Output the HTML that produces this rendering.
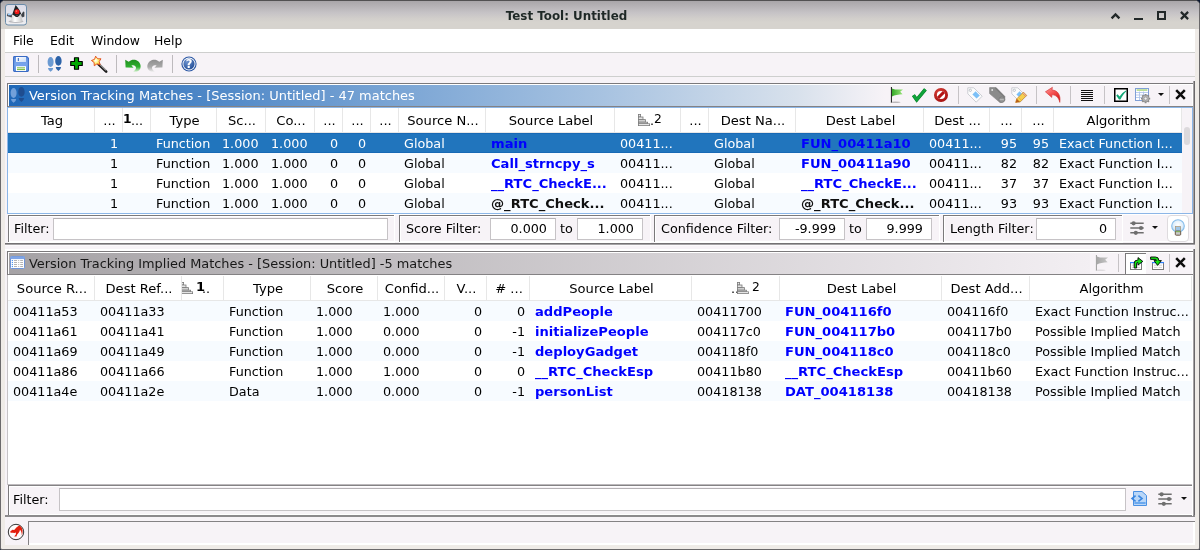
<!DOCTYPE html>
<html><head><meta charset="utf-8"><title>Test Tool: Untitled</title>
<style>
*{box-sizing:border-box;margin:0;padding:0}
html,body{width:1200px;height:550px;overflow:hidden;background:#0c1830}
body{font-family:"DejaVu Sans","Liberation Sans",sans-serif;font-size:13px;color:#000;position:relative}
.a{position:absolute}
.t{line-height:16px;height:16px;white-space:nowrap;will-change:transform}
.in{position:relative}
svg{overflow:visible}
</style></head><body>
<div class="a" style="left:0px;top:0px;width:1200px;height:550px;background:#efebe7;border:1px solid #6b696b;border-top-color:#525152;border-radius:5px 5px 2px 2px"></div>
<div class="a" style="left:1px;top:1px;width:1198px;height:28px;border-radius:4px 4px 0 0;background:linear-gradient(#a9a6a9 0,#b5b2b5 18%,#c6c3c6 42%,#d1cecb 62%,#d6d3ce 76%,#d6d3ce 100%)"></div>
<svg class="a" style="left:5px;top:4px" width="22" height="21" viewBox="0 0 22 21"><defs><linearGradient id="dk1" x1="0" y1="0" x2="0" y2="1"><stop offset="0" stop-color="#dcdce8"/><stop offset="1" stop-color="#eeeef0"/></linearGradient>
<linearGradient id="dk2" x1="0" y1="0" x2="1" y2="0"><stop offset="0" stop-color="#d0d0d0"/><stop offset="0.35" stop-color="#ffffff"/><stop offset="1" stop-color="#c4c4c4"/></linearGradient></defs>
<rect x="0.5" y="0.5" width="21" height="20.5" rx="2.5" fill="url(#dk1)" stroke="#6a8ba8"/>
<ellipse cx="11" cy="17.6" rx="7.5" ry="1.4" fill="#b9b9bd"/>
<path d="M10.6 1 C9.8 3.4 8.6 6.4 7.6 9.6 L6.4 13 L17 12.4 C16 8.6 14 4.4 10.6 1 Z" fill="#1e2224"/>
<path d="M7.2 10.4 C9 11.6 13 11.8 15.8 10 C16.6 12.6 17.2 15 17.6 17.2 C14 18.4 9.4 18.4 6 17.2 C6.2 15 6.6 12.6 7.2 10.4 Z" fill="url(#dk2)"/>
<path d="M8.2 9.6 C9.6 11.6 13.4 11.8 15.4 9.4 C14.4 12 13 13 11.6 13 C10.2 13 9 12 8.2 9.6Z" fill="#1e2224"/>
<circle cx="12" cy="7.8" r="2.5" fill="#f01818"/><circle cx="11.4" cy="7.1" r="0.9" fill="#ff6a5a"/>
<path d="M7 10.6 L2.4 9.6 L1.8 12 L6.6 13.4 Z" fill="#4a4e55"/><ellipse cx="4.6" cy="10.4" rx="1.9" ry="0.9" fill="#9fd0ff"/>
<path d="M16.4 10.6 L18.2 7.6 L19.4 8 L19.4 12.6 L17.4 13.4 Z" fill="#3c4046"/></svg>
<div class="a t " style="left:0px;top:8px;width:1133px;text-align:center;font-size:11.9px;font-weight:bold;color:#1e2826">Test Tool: Untitled</div>
<svg class="a" style="left:1110px;top:12px" width="11" height="8" viewBox="0 0 11 8"><path d="M1.6 6.4 L5.5 2.4 L9.4 6.4" fill="none" stroke="#222829" stroke-width="2.3"/></svg>
<div class="a" style="left:1134px;top:18px;width:9px;height:2px;background:#222829"></div>
<div class="a" style="left:1157px;top:11px;width:9px;height:9px;border:2px solid #222829"></div>
<svg class="a" style="left:1180px;top:11px" width="9" height="9" viewBox="0 0 9 9"><path d="M0.9 0.9 L8.1 8.1 M8.1 0.9 L0.9 8.1" stroke="#222829" stroke-width="2.2"/></svg>
<div class="a" style="left:5px;top:29px;width:1190px;height:23px;background:#fff"></div>
<div class="a t " style="left:13px;top:33px;font-size:12.4px">File</div>
<div class="a t " style="left:50px;top:33px;font-size:12.4px">Edit</div>
<div class="a t " style="left:91px;top:33px;font-size:12.4px">Window</div>
<div class="a t " style="left:154px;top:33px;font-size:12.4px">Help</div>
<div class="a" style="left:5px;top:52px;width:1190px;height:493px;background:#f7f3f7"></div>
<div class="a" style="left:5px;top:52px;width:1190px;height:1px;background:#cecfce"></div>
<div class="a" style="left:5px;top:76px;width:1190px;height:1px;background:#cecfce"></div>
<div class="a" style="left:38px;top:55px;width:1px;height:18px;background:#bdbabd"></div>
<div class="a" style="left:116px;top:55px;width:1px;height:18px;background:#bdbabd"></div>
<div class="a" style="left:172px;top:55px;width:1px;height:18px;background:#bdbabd"></div>
<svg class="a" style="left:13px;top:56px" width="16" height="16" viewBox="0 0 16 16"><defs><linearGradient id="fl1" x1="0" y1="0" x2="0" y2="1"><stop offset="0" stop-color="#5b8ee0"/><stop offset="0.5" stop-color="#78a4ec"/><stop offset="1" stop-color="#5f93e4"/></linearGradient>
<linearGradient id="fl2" x1="0" y1="0" x2="1" y2="1"><stop offset="0" stop-color="#ffffff"/><stop offset="1" stop-color="#c9dcf6"/></linearGradient></defs>
<path d="M0.6 1.4 Q0.6 0.6 1.4 0.6 L13.8 0.6 L15.4 2.2 L15.4 14.6 Q15.4 15.4 14.6 15.4 L1.4 15.4 Q0.6 15.4 0.6 14.6 Z" fill="url(#fl1)" stroke="#3a6bc4" stroke-width="1.1"/>
<rect x="3" y="1" width="10" height="5" fill="url(#fl2)"/>
<rect x="4.8" y="2" width="1.1" height="3" fill="#3a6bc4"/>
<rect x="3" y="10.2" width="10" height="4.8" fill="#ffffff"/>
<rect x="4" y="11.3" width="8" height="1.1" fill="#7fbf4a"/><rect x="4" y="13" width="8" height="1.1" fill="#7fbf4a"/></svg>
<svg class="a" style="left:47px;top:56px" width="16" height="16" viewBox="0 0 16 16"><ellipse cx="3.6" cy="6" rx="3" ry="5" fill="#6b9ad2"/><path d="M1 12 L6.2 12 Q6 14.6 3.6 15.8 Q1.2 14.6 1 12Z" fill="#6b9ad2"/>
<ellipse cx="11.4" cy="4.9" rx="3.2" ry="4.9" fill="#2c62a8"/><path d="M8.7 11 L14.1 11 Q13.9 13.8 11.4 15 Q8.9 13.8 8.7 11Z" fill="#2c62a8"/></svg>
<svg class="a" style="left:70px;top:57px" width="13" height="13" viewBox="0 0 13 13"><path d="M4.5 0.75 H8.5 V4.5 H12.25 V8.5 H8.5 V12.25 H4.5 V8.5 H0.75 V4.5 H4.5 Z" fill="#00a800" stroke="#000" stroke-width="1.2" stroke-linejoin="round"/></svg>
<svg class="a" style="left:91px;top:56px" width="16" height="16" viewBox="0 0 16 16"><defs><radialGradient id="wg" cx="0.45" cy="0.45" r="0.6"><stop offset="0" stop-color="#ffffff"/><stop offset="0.45" stop-color="#fff27a"/><stop offset="1" stop-color="#ffc21a"/></radialGradient></defs>
<path d="M7.6 8.2 L15.2 15.6" stroke="#1c1c1c" stroke-width="2.6" stroke-linecap="round"/><path d="M8 7.6 L15 14.4" stroke="#a8a8a8" stroke-width="1.1"/>
<path d="M4.61 0.18 L6.68 2.77 L10.00 2.81 L8.17 5.58 L9.17 8.74 L5.97 7.86 L3.26 9.78 L3.12 6.47 L0.45 4.49 L3.56 3.32 Z" fill="url(#wg)" stroke="#e2481a" stroke-width="0.9" stroke-linejoin="round"/></svg>
<svg class="a" style="left:125px;top:59px" width="16" height="14" viewBox="0 0 16 14"><defs><linearGradient id="ug" x1="0" y1="0" x2="0" y2="1"><stop offset="0" stop-color="#1f8f1f"/><stop offset="0.6" stop-color="#2fae2f"/><stop offset="1" stop-color="#d4f0d0"/></linearGradient></defs><path d="M0.2 0.8 L0.6 8.4 L8.6 8.8 L6.4 6.6 C8.6 5.6 10.8 6.6 11 8.6 C11.1 10.4 10 11.8 8.2 12.4 C11 13.4 14 12.2 15.3 9.4 C16.6 5.6 14 1.6 10 0.8 C8 0.4 5.8 0.9 3.6 2.8 Z" fill="url(#ug)"/></svg>
<svg class="a" style="left:147px;top:59px" width="16" height="14" viewBox="0 0 16 14"><defs><linearGradient id="rg" x1="0" y1="0" x2="0" y2="1"><stop offset="0" stop-color="#8e8e8e"/><stop offset="0.6" stop-color="#a9a9a9"/><stop offset="1" stop-color="#ececec"/></linearGradient></defs><g transform="translate(16,0) scale(-1,1)"><path d="M0.2 0.8 L0.6 8.4 L8.6 8.8 L6.4 6.6 C8.6 5.6 10.8 6.6 11 8.6 C11.1 10.4 10 11.8 8.2 12.4 C11 13.4 14 12.2 15.3 9.4 C16.6 5.6 14 1.6 10 0.8 C8 0.4 5.8 0.9 3.6 2.8 Z" fill="url(#rg)"/></g></svg>
<svg class="a" style="left:181px;top:56px;will-change:transform" width="16" height="16" viewBox="0 0 16 16"><defs><radialGradient id="hg" cx="0.35" cy="0.3" r="0.8"><stop offset="0" stop-color="#6d93cf"/><stop offset="1" stop-color="#1f4a94"/></radialGradient></defs>
<circle cx="8" cy="8" r="7.6" fill="#2a57a4"/><circle cx="8" cy="8" r="6.5" fill="#fff"/><circle cx="8" cy="8" r="5.6" fill="url(#hg)"/>
<text x="8" y="12.2" text-anchor="middle" font-family="DejaVu Sans" font-weight="bold" font-size="11.5" fill="#fff">?</text></svg>
<div class="a" style="left:7px;top:83px;width:1188px;height:1px;background:#7b797b"></div>
<div class="a" style="left:7px;top:83px;width:1px;height:24px;background:#7b797b"></div>
<div class="a" style="left:1193px;top:81px;width:1px;height:163px;background:#a5a2a5"></div>
<div class="a" style="left:1194px;top:81px;width:1px;height:163px;background:#6b696b"></div>
<div class="a" style="left:8px;top:241px;width:1184px;height:1px;background:#fff"></div>
<div class="a" style="left:5px;top:243px;width:1190px;height:1px;background:#737173"></div>
<div class="a" style="left:5px;top:244px;width:1190px;height:1px;background:#a5a2a5"></div>
<div class="a" style="left:5px;top:245px;width:1188px;height:1px;background:#fcfafc"></div>
<div class="a" style="left:5px;top:249px;width:1188px;height:2px;background:#fff"></div>
<div class="a" style="left:8px;top:84px;width:1185px;height:1px;background:#fff"></div>
<div class="a" style="left:8px;top:84px;width:1px;height:22px;background:#fff"></div>
<div class="a" style="left:1192px;top:84px;width:1px;height:159px;background:#fff"></div>
<div class="a" style="left:9px;top:85px;width:876px;height:21px;background:linear-gradient(90deg,#2068b8 0,#7ca6d5 45%,#a8c3e1 68%,#d8e1ec 90%,#f7f3f7 100%)"></div>
<div class="a" style="left:8px;top:106px;width:1185px;height:1px;background:#848284"></div>
<svg class="a" style="left:10px;top:87px" width="16" height="16" viewBox="0 0 16 16"><ellipse cx="3.6" cy="6" rx="3" ry="5" fill="#72a0da"/><path d="M1 12 L6.2 12 Q6 14.6 3.6 15.8 Q1.2 14.6 1 12Z" fill="#72a0da"/>
<ellipse cx="11.4" cy="4.9" rx="3.2" ry="4.9" fill="#1f4d90"/><path d="M8.7 11 L14.1 11 Q13.9 13.8 11.4 15 Q8.9 13.8 8.7 11Z" fill="#1f4d90"/></svg>
<div class="a t " style="left:29px;top:88px;font-size:12.97px;color:#fff">Version Tracking Matches - [Session: Untitled] - 47 matches</div>
<div class="a" style="left:958px;top:86px;width:1px;height:18px;background:#c6c3c6"></div>
<div class="a" style="left:1036px;top:86px;width:1px;height:18px;background:#c6c3c6"></div>
<div class="a" style="left:1070px;top:86px;width:1px;height:18px;background:#c6c3c6"></div>
<div class="a" style="left:1104px;top:86px;width:1px;height:18px;background:#c6c3c6"></div>
<div class="a" style="left:1169px;top:86px;width:1px;height:18px;background:#c6c3c6"></div>
<svg class="a" style="left:890px;top:87px" width="14" height="16" viewBox="0 0 14 16"><defs><linearGradient id="fg1" x1="0" y1="0" x2="1" y2="0"><stop offset="0" stop-color="#35a828"/><stop offset="1" stop-color="#9be67a"/></linearGradient></defs>
<rect x="0.9" y="0" width="1.1" height="15.5" fill="#2d2d2d"/>
<path d="M2 1.4 C4.5 2.6 8.5 2.8 13 2.4 L10.2 4.8 L12.6 7.2 C8.4 7.4 4.4 8 2 9.4 Z" fill="url(#fg1)"/>
<ellipse cx="5.5" cy="15.2" rx="5" ry="0.7" fill="#2d2d2d" opacity="0.3"/></svg>
<svg class="a" style="left:912px;top:88px" width="15" height="14" viewBox="0 0 15 14"><path d="M1.4 7.2 L4.7 11.8 L13.4 1.3" fill="none" stroke="#067a24" stroke-width="3.6" stroke-linejoin="miter"/><path d="M1.4 7.2 L4.7 11.8 L13.4 1.3" fill="none" stroke="#0fa33a" stroke-width="2.6" stroke-linejoin="miter"/></svg>
<svg class="a" style="left:934px;top:88px" width="14" height="14" viewBox="0 0 14 14"><defs><radialGradient id="ng" cx="0.4" cy="0.3" r="0.8"><stop offset="0" stop-color="#d8433a"/><stop offset="1" stop-color="#a00a0a"/></radialGradient></defs>
<circle cx="7" cy="7" r="7" fill="url(#ng)"/><circle cx="7" cy="7" r="4.1" fill="#fff"/>
<path d="M2.9 8.9 L8.9 2.9 L11.1 5.1 L5.1 11.1 Z" fill="#b41414"/></svg>
<svg class="a" style="left:967px;top:87px" width="16" height="16" viewBox="0 0 16 16"><path d="M0.8 0.8 L6.8 0.8 L15.2 9.2 L9.2 15.2 L0.8 6.8 Z" fill="#fcfcfc" stroke="#c6c8cf" stroke-width="0.9" stroke-linejoin="round"/>
<circle cx="3.3" cy="3.3" r="1.15" fill="#fff" stroke="#a9adb8" stroke-width="0.7"/>
<path d="M5.4 7.4 L8.6 4.2 L12.8 8.4 L9.6 11.6 Z" fill="#7cc0f7"/></svg>
<svg class="a" style="left:989px;top:87px" width="16" height="16" viewBox="0 0 16 16"><path d="M0.6 0.6 L7 0.6 L15.8 9.4 L15.8 13.6 Q14.4 16 11 15.6 L0.6 6.6 Z" fill="#8b8b8b" stroke="#7c7c7c" stroke-width="0.6"/>
<path d="M7 0.6 L15.8 9.4 L15.8 11 L6 1.4Z" fill="#7a7a7a"/>
<circle cx="3.2" cy="3" r="0.9" fill="#e8e8e8"/><ellipse cx="12.8" cy="12.6" rx="2.9" ry="2.7" fill="#979797" stroke="#767676" stroke-width="0.6"/><rect x="10.8" y="12.1" width="4" height="1" fill="#bdbdbd"/></svg>
<svg class="a" style="left:1011px;top:87px" width="16" height="16" viewBox="0 0 16 16"><path d="M0.8 0.8 L6.8 0.8 L15.2 9.2 L9.2 15.2 L0.8 6.8 Z" fill="#fcfcfc" stroke="#c6c8cf" stroke-width="0.9" stroke-linejoin="round"/>
<circle cx="3.3" cy="3.3" r="1.15" fill="#fff" stroke="#a9adb8" stroke-width="0.7"/>
<path d="M5.4 7.4 L8.6 4.2 L12.8 8.4 L9.6 11.6 Z" fill="#7cc0f7"/><path d="M4.6 15.4 L5.8 11.8 L12.4 5.2 L15.6 8.4 L9 15 Z" fill="#f6cf4e" stroke="#c8862a" stroke-width="0.7"/><path d="M7.4 10.2 L10.6 13.4" stroke="#e8b030" stroke-width="0.8"/><path d="M4.6 15.4 L5.8 11.8 L9 15 Z" fill="#b8601a"/><path d="M11.4 6.2 L14.6 9.4 L15.6 8.4 L12.4 5.2Z" fill="#f0b0a0" stroke="#c8862a" stroke-width="0.5"/></svg>
<svg class="a" style="left:1045px;top:87px" width="16" height="16" viewBox="0 0 16 16"><defs><linearGradient id="ru" x1="0" y1="0" x2="0.6" y2="1"><stop offset="0" stop-color="#ff9c9c"/><stop offset="0.5" stop-color="#f45050"/><stop offset="1" stop-color="#d81818"/></linearGradient></defs>
<path d="M0.4 4.8 L7.4 0.3 L7 3 C12.6 3.2 16 8 14.8 15.4 C13.6 10.4 11 7.8 6.8 7.8 L6.8 10.4 Z" fill="url(#ru)" stroke="#d03030" stroke-width="0.6" stroke-linejoin="round"/></svg>
<svg class="a" style="left:1081px;top:90px" width="12" height="11" viewBox="0 0 12 11"><rect x="0" y="0" width="12" height="1" fill="#111"/><rect x="0" y="2" width="12" height="1" fill="#111"/><rect x="0" y="4" width="12" height="1" fill="#111"/><rect x="0" y="6" width="12" height="1" fill="#111"/><rect x="0" y="8" width="12" height="1" fill="#111"/><rect x="0" y="10" width="12" height="1" fill="#111"/></svg>
<svg class="a" style="left:1114px;top:88px" width="14" height="14" viewBox="0 0 14 14"><rect x="0.75" y="0.75" width="12.5" height="12.5" fill="#fff" stroke="#000" stroke-width="1.5"/>
<path d="M2.2 7.4 L3.6 6.2 L5.6 8.6 C7.4 5.8 9.4 3.8 12 2.4 L12.4 3.2 C10 5.4 8 8 6.4 11.6 L5 11.6 Z" fill="#12a878"/></svg>
<svg class="a" style="left:1135px;top:88px" width="16" height="16" viewBox="0 0 16 16"><rect x="0.5" y="0.5" width="13" height="12" fill="#fff" stroke="#7f9fd6"/><rect x="1" y="1" width="12" height="2" fill="#eaf2e0"/><rect x="2" y="1.6" width="10" height="0.9" fill="#8ccb52"/>
<g stroke="#a9c2ea" stroke-width="0.8"><path d="M1 4.5H13M1 7H13M1 9.5H13M4.5 3.5V12M8.5 3.5V12"/></g>
<g transform="translate(10.6,10.6)"><circle r="3.8" fill="#9a9a9a"/><g stroke="#8a8a8a" stroke-width="1.8"><path d="M-4.6 0H4.6M0 -4.6V4.6M-3.3 -3.3L3.3 3.3M-3.3 3.3L3.3 -3.3"/></g><circle r="3" fill="#b4b4b4"/><circle r="1.5" fill="#f2f2f2" stroke="#808080" stroke-width="0.5"/></g></svg>
<svg class="a" style="left:1158px;top:93px" width="6" height="3" viewBox="0 0 6 3"><path d="M0 0 H6 L3 3 Z" fill="#111"/></svg>
<svg class="a" style="left:1175px;top:89px" width="11" height="11" viewBox="0 0 11 11"><path d="M1.2 1.2 L9.8 9.8 M9.8 1.2 L1.2 9.8" stroke="#0c0c0c" stroke-width="2.5"/></svg>
<div class="a" style="left:7px;top:107px;width:1186px;height:1px;background:#8cb6e7"></div>
<div class="a" style="left:7px;top:107px;width:1px;height:107px;background:#8cb6e7"></div>
<div class="a" style="left:7px;top:213px;width:1186px;height:1px;background:#8cb6e7"></div>
<div class="a" style="left:1192px;top:107px;width:1px;height:107px;background:#8cb6e7"></div>
<div class="a" style="left:8px;top:108px;width:1184px;height:105px;background:#fff"></div>
<div class="a" style="left:8px;top:132px;width:1174px;height:1px;background:#e7e7e7"></div>
<div class="a" style="left:94px;top:108px;width:1px;height:24px;background:#e7e7e7"></div>
<div class="a t " style="left:9px;top:113px;width:86px;text-align:center;font-size:13.1px">Tag</div>
<div class="a" style="left:122px;top:108px;width:1px;height:24px;background:#e7e7e7"></div>
<div class="a t " style="left:96px;top:113px;width:27px;text-align:center;font-size:13.1px">...</div>
<div class="a" style="left:150px;top:108px;width:1px;height:24px;background:#e7e7e7"></div>
<div class="a" style="left:216px;top:108px;width:1px;height:24px;background:#e7e7e7"></div>
<div class="a t " style="left:152px;top:113px;width:65px;text-align:center;font-size:13.1px">Type</div>
<div class="a" style="left:265px;top:108px;width:1px;height:24px;background:#e7e7e7"></div>
<div class="a t " style="left:218px;top:113px;width:48px;text-align:center;font-size:13.1px">Sc...</div>
<div class="a" style="left:314px;top:108px;width:1px;height:24px;background:#e7e7e7"></div>
<div class="a t " style="left:267px;top:113px;width:48px;text-align:center;font-size:13.1px">Co...</div>
<div class="a" style="left:342px;top:108px;width:1px;height:24px;background:#e7e7e7"></div>
<div class="a t " style="left:316px;top:113px;width:27px;text-align:center;font-size:13.1px">...</div>
<div class="a" style="left:370px;top:108px;width:1px;height:24px;background:#e7e7e7"></div>
<div class="a t " style="left:344px;top:113px;width:27px;text-align:center;font-size:13.1px">...</div>
<div class="a" style="left:398px;top:108px;width:1px;height:24px;background:#e7e7e7"></div>
<div class="a t " style="left:372px;top:113px;width:27px;text-align:center;font-size:13.1px">...</div>
<div class="a" style="left:485px;top:108px;width:1px;height:24px;background:#e7e7e7"></div>
<div class="a t " style="left:400px;top:113px;width:86px;text-align:center;font-size:13.1px">Source N...</div>
<div class="a" style="left:614px;top:108px;width:1px;height:24px;background:#e7e7e7"></div>
<div class="a t " style="left:487px;top:113px;width:128px;text-align:center;font-size:13.1px">Source Label</div>
<div class="a" style="left:680px;top:108px;width:1px;height:24px;background:#e7e7e7"></div>
<div class="a" style="left:708px;top:108px;width:1px;height:24px;background:#e7e7e7"></div>
<div class="a t " style="left:682px;top:113px;width:27px;text-align:center;font-size:13.1px">...</div>
<div class="a" style="left:795px;top:108px;width:1px;height:24px;background:#e7e7e7"></div>
<div class="a t " style="left:710px;top:113px;width:86px;text-align:center;font-size:13.1px">Dest Na...</div>
<div class="a" style="left:923px;top:108px;width:1px;height:24px;background:#e7e7e7"></div>
<div class="a t " style="left:797px;top:113px;width:127px;text-align:center;font-size:13.1px">Dest Label</div>
<div class="a" style="left:989px;top:108px;width:1px;height:24px;background:#e7e7e7"></div>
<div class="a t " style="left:925px;top:113px;width:65px;text-align:center;font-size:13.1px">Dest ...</div>
<div class="a" style="left:1021px;top:108px;width:1px;height:24px;background:#e7e7e7"></div>
<div class="a t " style="left:991px;top:113px;width:31px;text-align:center;font-size:13.1px">...</div>
<div class="a" style="left:1053px;top:108px;width:1px;height:24px;background:#e7e7e7"></div>
<div class="a t " style="left:1023px;top:113px;width:31px;text-align:center;font-size:13.1px">...</div>
<div class="a" style="left:1181px;top:108px;width:1px;height:24px;background:#e7e7e7"></div>
<div class="a t " style="left:1055px;top:113px;width:127px;text-align:center;font-size:13.1px">Algorithm</div>
<div class="a t " style="left:123px;top:111px;font-size:12.3px;font-weight:bold">1</div>
<div class="a t " style="left:131px;top:113px;font-size:12.75px">...</div>
<svg class="a" style="left:638px;top:114px" width="12" height="12" viewBox="0 0 12 12"><g fill="#e4e4e4" stroke="#7a7a7a" stroke-width="0.8"><rect x="0.4" y="0.4" width="2.2" height="2.6"/><rect x="0.4" y="3" width="4.6" height="2.6"/><rect x="0.4" y="5.6" width="7" height="2.6" fill="#cfcfcf"/><rect x="0.4" y="8.2" width="9.2" height="1.6"/><rect x="0.4" y="9.8" width="11.2" height="1.8" fill="#fff"/></g></svg>
<div class="a t " style="left:650px;top:113px;font-size:12.75px">.</div>
<div class="a t " style="left:654px;top:111px;font-size:12.3px">2</div>
<div class="a" style="left:8px;top:133px;width:1174px;height:20px;background:#2175bd;overflow:hidden"></div>
<div class="a" style="left:8px;top:133px;width:1174px;height:1px;background:#1869b5"></div>
<div class="a" style="left:8px;top:152px;width:1174px;height:1px;background:#1869b5"></div>
<div class="a t " style="left:95px;top:136px;width:23px;text-align:right;font-size:12.75px;color:#fff;">1</div>
<div class="a t " style="left:156px;top:136px;font-size:12.75px;color:#fff;">Function</div>
<div class="a t " style="left:222px;top:136px;font-size:12.75px;color:#fff;">1.000</div>
<div class="a t " style="left:271px;top:136px;font-size:12.75px;color:#fff;">1.000</div>
<div class="a t " style="left:315px;top:136px;width:23px;text-align:right;font-size:12.75px;color:#fff;">0</div>
<div class="a t " style="left:343px;top:136px;width:23px;text-align:right;font-size:12.75px;color:#fff;">0</div>
<div class="a t " style="left:404px;top:136px;font-size:12.75px;color:#fff;">Global</div>
<div class="a t " style="left:491px;top:136px;font-size:13.1px;font-weight:bold;color:#0000ff">main</div>
<div class="a t " style="left:620px;top:136px;font-size:12.75px;color:#fff;">00411...</div>
<div class="a t " style="left:714px;top:136px;font-size:12.75px;color:#fff;">Global</div>
<div class="a t " style="left:801px;top:136px;font-size:13.1px;font-weight:bold;color:#0000ff">FUN_00411a10</div>
<div class="a t " style="left:929px;top:136px;font-size:12.75px;color:#fff;">00411...</div>
<div class="a t " style="left:990px;top:136px;width:27px;text-align:right;font-size:12.75px;color:#fff;">95</div>
<div class="a t " style="left:1022px;top:136px;width:27px;text-align:right;font-size:12.75px;color:#fff;">95</div>
<div class="a t " style="left:1059px;top:136px;font-size:12.75px;color:#fff;">Exact Function I...</div>
<div class="a" style="left:8px;top:153px;width:1174px;height:20px;background:#f7fbff;overflow:hidden"></div>
<div class="a t " style="left:95px;top:156px;width:23px;text-align:right;font-size:12.75px;">1</div>
<div class="a t " style="left:156px;top:156px;font-size:12.75px;">Function</div>
<div class="a t " style="left:222px;top:156px;font-size:12.75px;">1.000</div>
<div class="a t " style="left:271px;top:156px;font-size:12.75px;">1.000</div>
<div class="a t " style="left:315px;top:156px;width:23px;text-align:right;font-size:12.75px;">0</div>
<div class="a t " style="left:343px;top:156px;width:23px;text-align:right;font-size:12.75px;">0</div>
<div class="a t " style="left:404px;top:156px;font-size:12.75px;">Global</div>
<div class="a t " style="left:491px;top:156px;font-size:13.1px;font-weight:bold;color:#0000ff">Call_strncpy_s</div>
<div class="a t " style="left:620px;top:156px;font-size:12.75px;">00411...</div>
<div class="a t " style="left:714px;top:156px;font-size:12.75px;">Global</div>
<div class="a t " style="left:801px;top:156px;font-size:13.1px;font-weight:bold;color:#0000ff">FUN_00411a90</div>
<div class="a t " style="left:929px;top:156px;font-size:12.75px;">00411...</div>
<div class="a t " style="left:990px;top:156px;width:27px;text-align:right;font-size:12.75px;">82</div>
<div class="a t " style="left:1022px;top:156px;width:27px;text-align:right;font-size:12.75px;">82</div>
<div class="a t " style="left:1059px;top:156px;font-size:12.75px;">Exact Function I...</div>
<div class="a" style="left:8px;top:173px;width:1174px;height:20px;background:#fff;overflow:hidden"></div>
<div class="a t " style="left:95px;top:176px;width:23px;text-align:right;font-size:12.75px;">1</div>
<div class="a t " style="left:156px;top:176px;font-size:12.75px;">Function</div>
<div class="a t " style="left:222px;top:176px;font-size:12.75px;">1.000</div>
<div class="a t " style="left:271px;top:176px;font-size:12.75px;">1.000</div>
<div class="a t " style="left:315px;top:176px;width:23px;text-align:right;font-size:12.75px;">0</div>
<div class="a t " style="left:343px;top:176px;width:23px;text-align:right;font-size:12.75px;">0</div>
<div class="a t " style="left:404px;top:176px;font-size:12.75px;">Global</div>
<div class="a t " style="left:491px;top:176px;font-size:13.1px;font-weight:bold;color:#0000ff">__RTC_CheckE...</div>
<div class="a t " style="left:620px;top:176px;font-size:12.75px;">00411...</div>
<div class="a t " style="left:714px;top:176px;font-size:12.75px;">Global</div>
<div class="a t " style="left:801px;top:176px;font-size:13.1px;font-weight:bold;color:#0000ff">__RTC_CheckE...</div>
<div class="a t " style="left:929px;top:176px;font-size:12.75px;">00411...</div>
<div class="a t " style="left:990px;top:176px;width:27px;text-align:right;font-size:12.75px;">37</div>
<div class="a t " style="left:1022px;top:176px;width:27px;text-align:right;font-size:12.75px;">37</div>
<div class="a t " style="left:1059px;top:176px;font-size:12.75px;">Exact Function I...</div>
<div class="a" style="left:8px;top:193px;width:1174px;height:20px;background:#f7fbff;overflow:hidden"></div>
<div class="a t " style="left:95px;top:196px;width:23px;text-align:right;font-size:12.75px;">1</div>
<div class="a t " style="left:156px;top:196px;font-size:12.75px;">Function</div>
<div class="a t " style="left:222px;top:196px;font-size:12.75px;">1.000</div>
<div class="a t " style="left:271px;top:196px;font-size:12.75px;">1.000</div>
<div class="a t " style="left:315px;top:196px;width:23px;text-align:right;font-size:12.75px;">0</div>
<div class="a t " style="left:343px;top:196px;width:23px;text-align:right;font-size:12.75px;">0</div>
<div class="a t " style="left:404px;top:196px;font-size:12.75px;">Global</div>
<div class="a t " style="left:491px;top:196px;font-size:13.1px;font-weight:bold;color:#101010">@_RTC_Check...</div>
<div class="a t " style="left:620px;top:196px;font-size:12.75px;">00411...</div>
<div class="a t " style="left:714px;top:196px;font-size:12.75px;">Global</div>
<div class="a t " style="left:801px;top:196px;font-size:13.1px;font-weight:bold;color:#101010">@_RTC_Check...</div>
<div class="a t " style="left:929px;top:196px;font-size:12.75px;">00411...</div>
<div class="a t " style="left:990px;top:196px;width:27px;text-align:right;font-size:12.75px;">93</div>
<div class="a t " style="left:1022px;top:196px;width:27px;text-align:right;font-size:12.75px;">93</div>
<div class="a t " style="left:1059px;top:196px;font-size:12.75px;">Exact Function I...</div>
<div class="a" style="left:1182px;top:108px;width:10px;height:105px;background:#f7f3f7"></div>
<div class="a" style="left:1184px;top:127px;width:6px;height:18px;background:#dcd9dc;border-radius:3px"></div>
<div class="a" style="left:8px;top:214px;width:1184px;height:1px;background:#fff"></div>
<div class="a" style="left:8px;top:215px;width:386px;height:1px;background:#7b797b"></div>
<div class="a" style="left:8px;top:215px;width:1px;height:27px;background:#7b797b"></div>
<div class="a" style="left:9px;top:216px;width:385px;height:1px;background:#fff"></div>
<div class="a" style="left:9px;top:216px;width:1px;height:26px;background:#fff"></div>
<div class="a" style="left:394px;top:215px;width:1px;height:28px;background:#fff"></div>
<div class="a" style="left:8px;top:242px;width:386px;height:1px;background:#fff"></div>
<div class="a" style="left:399px;top:215px;width:251px;height:1px;background:#7b797b"></div>
<div class="a" style="left:399px;top:215px;width:1px;height:27px;background:#7b797b"></div>
<div class="a" style="left:400px;top:216px;width:250px;height:1px;background:#fff"></div>
<div class="a" style="left:400px;top:216px;width:1px;height:26px;background:#fff"></div>
<div class="a" style="left:650px;top:215px;width:1px;height:28px;background:#fff"></div>
<div class="a" style="left:399px;top:242px;width:251px;height:1px;background:#fff"></div>
<div class="a" style="left:654px;top:215px;width:285px;height:1px;background:#7b797b"></div>
<div class="a" style="left:654px;top:215px;width:1px;height:27px;background:#7b797b"></div>
<div class="a" style="left:655px;top:216px;width:284px;height:1px;background:#fff"></div>
<div class="a" style="left:655px;top:216px;width:1px;height:26px;background:#fff"></div>
<div class="a" style="left:939px;top:215px;width:1px;height:28px;background:#fff"></div>
<div class="a" style="left:654px;top:242px;width:285px;height:1px;background:#fff"></div>
<div class="a" style="left:943px;top:215px;width:179px;height:1px;background:#7b797b"></div>
<div class="a" style="left:943px;top:215px;width:1px;height:27px;background:#7b797b"></div>
<div class="a" style="left:944px;top:216px;width:178px;height:1px;background:#fff"></div>
<div class="a" style="left:944px;top:216px;width:1px;height:26px;background:#fff"></div>
<div class="a" style="left:1122px;top:215px;width:1px;height:28px;background:#fff"></div>
<div class="a" style="left:943px;top:242px;width:179px;height:1px;background:#fff"></div>
<div class="a t " style="left:14px;top:221px;font-size:12.75px">Filter:</div>
<div class="a" style="left:53px;top:218px;width:335px;height:22px;background:#fff;border:1px solid #c6c3c6;border-top-color:#b5b2b5"></div>
<div class="a t " style="left:406px;top:221px;font-size:12.75px">Score Filter:</div>
<div class="a" style="left:490px;top:218px;width:66px;height:22px;background:#fff;border:1px solid #c6c3c6;border-top-color:#b5b2b5"></div>
<div class="a t " style="left:490px;top:221px;width:57px;text-align:right;font-size:12.75px">0.000</div>
<div class="a t " style="left:560px;top:221px;font-size:12.75px">to</div>
<div class="a" style="left:577px;top:218px;width:66px;height:22px;background:#fff;border:1px solid #c6c3c6;border-top-color:#b5b2b5"></div>
<div class="a t " style="left:577px;top:221px;width:57px;text-align:right;font-size:12.75px">1.000</div>
<div class="a t " style="left:661px;top:221px;font-size:12.75px">Confidence Filter:</div>
<div class="a" style="left:779px;top:218px;width:66px;height:22px;background:#fff;border:1px solid #c6c3c6;border-top-color:#b5b2b5"></div>
<div class="a t " style="left:779px;top:221px;width:57px;text-align:right;font-size:12.75px">-9.999</div>
<div class="a t " style="left:849px;top:221px;font-size:12.75px">to</div>
<div class="a" style="left:866px;top:218px;width:66px;height:22px;background:#fff;border:1px solid #c6c3c6;border-top-color:#b5b2b5"></div>
<div class="a t " style="left:866px;top:221px;width:57px;text-align:right;font-size:12.75px">9.999</div>
<div class="a t " style="left:950px;top:221px;font-size:12.75px">Length Filter:</div>
<div class="a" style="left:1036px;top:218px;width:80px;height:22px;background:#fff;border:1px solid #c6c3c6;border-top-color:#b5b2b5"></div>
<div class="a t " style="left:1036px;top:221px;width:71px;text-align:right;font-size:12.75px">0</div>
<svg class="a" style="left:1130px;top:221px" width="14" height="14" viewBox="0 0 14 14"><g stroke="#6e6e6e" stroke-width="1.5"><path d="M0.3 2.3H13.7M0.3 7H13.7M0.3 11.8H13.7"/></g><g fill="#6e6e6e"><circle cx="3.6" cy="2.3" r="2.1"/><circle cx="11" cy="7" r="2.1"/><circle cx="5.8" cy="11.8" r="2.1"/></g></svg>
<svg class="a" style="left:1152px;top:226px" width="6" height="3" viewBox="0 0 6 3"><path d="M0 0 H6 L3 3 Z" fill="#111"/></svg>
<div class="a" style="left:1167px;top:215px;width:22px;height:27px;background:#fff;border:1px solid #dedbde;border-radius:4px"></div>
<svg class="a" style="left:1171px;top:220px" width="14" height="16" viewBox="0 0 14 16"><defs><radialGradient id="bg1" cx="0.5" cy="0.4" r="0.6"><stop offset="0" stop-color="#ffffff"/><stop offset="0.65" stop-color="#dcedfb"/><stop offset="1" stop-color="#b4d6f3"/></radialGradient></defs>
<circle cx="7" cy="6" r="6.3" fill="url(#bg1)" stroke="#86bdea" stroke-width="1.1"/>
<rect x="4.4" y="6.6" width="5.2" height="5" fill="#9fc6e8" stroke="#a89474" stroke-width="0.7"/>
<rect x="4.3" y="11" width="5.4" height="4.2" rx="0.9" fill="#c9c9c9" stroke="#5d4a36" stroke-width="0.9"/>
<rect x="4.8" y="11" width="4.4" height="1.2" fill="#7fae5a"/></svg>
<div class="a" style="left:7px;top:251px;width:1188px;height:1px;background:#7b797b"></div>
<div class="a" style="left:7px;top:251px;width:1px;height:24px;background:#7b797b"></div>
<div class="a" style="left:7px;top:275px;width:1px;height:210px;background:#c6c3c6"></div>
<div class="a" style="left:1193px;top:249px;width:1px;height:268px;background:#a5a2a5"></div>
<div class="a" style="left:1194px;top:249px;width:1px;height:268px;background:#6b696b"></div>
<div class="a" style="left:5px;top:515px;width:1190px;height:2px;background:#8c8a8c"></div>
<div class="a" style="left:1192px;top:252px;width:1px;height:264px;background:#fff"></div>
<div class="a" style="left:8px;top:252px;width:1185px;height:1px;background:#fff"></div>
<div class="a" style="left:8px;top:252px;width:1px;height:22px;background:#fff"></div>
<div class="a" style="left:9px;top:253px;width:1081px;height:21px;background:linear-gradient(90deg,#a5a2a5 0,#f7f3f7 1140px)"></div>
<div class="a" style="left:8px;top:274px;width:1185px;height:1px;background:#848284"></div>
<svg class="a" style="left:10px;top:256px" width="15" height="13" viewBox="0 0 15 13"><rect x="0.5" y="0.5" width="14" height="12" rx="1" fill="#fff" stroke="#6f95d8"/><rect x="0.5" y="0.5" width="14" height="2.6" fill="#7ea4e6"/>
<g stroke="#b4b4b4" stroke-width="1"><path d="M4 4.5H7M8.2 4.5H9.2M10.2 4.5H13M4 6.5H7M8.2 6.5H9.2M10.2 6.5H13M4 8.5H7M8.2 8.5H9.2M10.2 8.5H13M4 10.5H7M8.2 10.5H9.2M10.2 10.5H13"/></g>
<g fill="#3f8cf0"><rect x="1.8" y="4" width="1.1" height="1.1"/><rect x="1.8" y="6" width="1.1" height="1.1"/><rect x="1.8" y="8" width="1.1" height="1.1"/><rect x="1.8" y="10" width="1.1" height="1.1"/></g></svg>
<div class="a t " style="left:29px;top:256px;font-size:12.9px;color:#181818">Version Tracking Implied Matches - [Session: Untitled] -5 matches</div>
<svg class="a" style="left:1095px;top:255px" width="14" height="16" viewBox="0 0 14 16"><defs><linearGradient id="fg2" x1="0" y1="0" x2="1" y2="0"><stop offset="0" stop-color="#a8a8a8"/><stop offset="1" stop-color="#c4c4c4"/></linearGradient></defs>
<rect x="0.9" y="0" width="1.1" height="15.5" fill="#a5a5a5"/>
<path d="M2 1.4 C4.5 2.6 8.5 2.8 13 2.4 L10.2 4.8 L12.6 7.2 C8.4 7.4 4.4 8 2 9.4 Z" fill="url(#fg2)"/>
<ellipse cx="5.5" cy="15.2" rx="5" ry="0.7" fill="#a5a5a5" opacity="0.3"/></svg>
<div class="a" style="left:1118px;top:254px;width:1px;height:18px;background:#c6c3c6"></div>
<div class="a" style="left:1169px;top:254px;width:1px;height:18px;background:#c6c3c6"></div>
<div class="a" style="left:1125px;top:253px;width:21px;height:21px;background:#fff;border-top:1px solid #7b797b;border-left:1px solid #7b797b"></div>
<svg class="a" style="left:1130px;top:256px" width="14" height="14" viewBox="0 0 14 14"><rect x="0.5" y="6.5" width="11" height="7" fill="#fff" stroke="#7a7a7a"/><rect x="0" y="6" width="12" height="1.2" fill="#2f80ff"/>
<g stroke="#c8c8c8" stroke-width="0.8"><path d="M2 9.2H5.4M6.6 9.2H10M2 11.4H5.4M6.6 11.4H10"/></g><path d="M4.2 12 L4.2 7 Q4.2 4.2 7.4 4.2 L8 4.2 L8 1.6 L12.8 5.4 L8 9 L8 6.6 L7.6 6.6 Q6.6 6.6 6.6 7.8 L6.6 12 Z" fill="#14e014" stroke="#000" stroke-width="0.9" stroke-linejoin="round"/></svg>
<svg class="a" style="left:1150px;top:256px" width="15" height="14" viewBox="0 0 15 14"><rect x="2.5" y="6.5" width="11" height="7" fill="#fff" stroke="#7a7a7a"/><rect x="2" y="6" width="12" height="1.2" fill="#2f80ff"/>
<g stroke="#c8c8c8" stroke-width="0.8"><path d="M4 9.2H7.4M8.6 9.2H12M4 11.4H7.4M8.6 11.4H12"/></g><path d="M0.6 1 L5.4 1 Q8.8 1 8.8 4.2 L8.8 4.6 L11.4 4.6 L7.6 9.4 L4 4.6 L6.4 4.6 L6.4 4.2 Q6.4 3.4 5.2 3.4 L0.6 3.4 Z" fill="#14e014" stroke="#000" stroke-width="0.9" stroke-linejoin="round"/></svg>
<svg class="a" style="left:1175px;top:257px" width="11" height="11" viewBox="0 0 11 11"><path d="M1.2 1.2 L9.8 9.8 M9.8 1.2 L1.2 9.8" stroke="#0c0c0c" stroke-width="2.5"/></svg>
<div class="a" style="left:8px;top:275px;width:1184px;height:209px;background:#fff"></div>
<div class="a" style="left:8px;top:300px;width:1184px;height:1px;background:#e7e7e7"></div>
<div class="a" style="left:94px;top:276px;width:1px;height:24px;background:#e7e7e7"></div>
<div class="a t " style="left:9px;top:281px;width:86px;text-align:center;font-size:13.1px">Source R...</div>
<div class="a" style="left:181px;top:276px;width:1px;height:24px;background:#e7e7e7"></div>
<div class="a t " style="left:96px;top:281px;width:86px;text-align:center;font-size:13.1px">Dest Ref...</div>
<div class="a" style="left:223px;top:276px;width:1px;height:24px;background:#e7e7e7"></div>
<div class="a" style="left:310px;top:276px;width:1px;height:24px;background:#e7e7e7"></div>
<div class="a t " style="left:225px;top:281px;width:86px;text-align:center;font-size:13.1px">Type</div>
<div class="a" style="left:377px;top:276px;width:1px;height:24px;background:#e7e7e7"></div>
<div class="a t " style="left:312px;top:281px;width:66px;text-align:center;font-size:13.1px">Score</div>
<div class="a" style="left:444px;top:276px;width:1px;height:24px;background:#e7e7e7"></div>
<div class="a t " style="left:379px;top:281px;width:66px;text-align:center;font-size:13.1px">Confid...</div>
<div class="a" style="left:486px;top:276px;width:1px;height:24px;background:#e7e7e7"></div>
<div class="a t " style="left:446px;top:281px;width:41px;text-align:center;font-size:13.1px">V...</div>
<div class="a" style="left:529px;top:276px;width:1px;height:24px;background:#e7e7e7"></div>
<div class="a t " style="left:488px;top:281px;width:42px;text-align:center;font-size:13.1px"># ...</div>
<div class="a" style="left:691px;top:276px;width:1px;height:24px;background:#e7e7e7"></div>
<div class="a t " style="left:531px;top:281px;width:161px;text-align:center;font-size:13.1px">Source Label</div>
<div class="a" style="left:779px;top:276px;width:1px;height:24px;background:#e7e7e7"></div>
<div class="a" style="left:941px;top:276px;width:1px;height:24px;background:#e7e7e7"></div>
<div class="a t " style="left:781px;top:281px;width:161px;text-align:center;font-size:13.1px">Dest Label</div>
<div class="a" style="left:1029px;top:276px;width:1px;height:24px;background:#e7e7e7"></div>
<div class="a t " style="left:943px;top:281px;width:87px;text-align:center;font-size:13.1px">Dest Add...</div>
<div class="a" style="left:1191px;top:276px;width:1px;height:24px;background:#e7e7e7"></div>
<div class="a t " style="left:1031px;top:281px;width:161px;text-align:center;font-size:13.1px">Algorithm</div>
<div class="a" style="left:182px;top:276px;width:41px;height:24px;overflow:hidden"><div class="in"><svg class="a" style="left:-1px;top:6px" width="12" height="12" viewBox="0 0 12 12"><g fill="#e4e4e4" stroke="#7a7a7a" stroke-width="0.8"><rect x="0.4" y="0.4" width="2.2" height="2.6"/><rect x="0.4" y="3" width="4.6" height="2.6"/><rect x="0.4" y="5.6" width="7" height="2.6" fill="#cfcfcf"/><rect x="0.4" y="8.2" width="9.2" height="1.6"/><rect x="0.4" y="9.8" width="11.2" height="1.8" fill="#fff"/></g></svg></div></div>
<div class="a t " style="left:196px;top:279px;font-size:13px;font-weight:bold">1</div>
<div class="a t " style="left:202px;top:281px;font-size:12.75px">..</div>
<div class="a t " style="left:731px;top:281px;font-size:12.75px">..</div>
<svg class="a" style="left:737px;top:282px" width="12" height="12" viewBox="0 0 12 12"><g fill="#e4e4e4" stroke="#7a7a7a" stroke-width="0.8"><rect x="0.4" y="0.4" width="2.2" height="2.6"/><rect x="0.4" y="3" width="4.6" height="2.6"/><rect x="0.4" y="5.6" width="7" height="2.6" fill="#cfcfcf"/><rect x="0.4" y="8.2" width="9.2" height="1.6"/><rect x="0.4" y="9.8" width="11.2" height="1.8" fill="#fff"/></g></svg>
<div class="a t " style="left:752px;top:279px;font-size:12.3px">2</div>
<div class="a" style="left:8px;top:301px;width:1184px;height:20px;background:#f7fbff"></div>
<div class="a t " style="left:13px;top:304px;font-size:12.75px">00411a53</div>
<div class="a t " style="left:100px;top:304px;font-size:12.75px">00411a33</div>
<div class="a t " style="left:229px;top:304px;font-size:12.75px">Function</div>
<div class="a t " style="left:316px;top:304px;font-size:12.75px">1.000</div>
<div class="a t " style="left:383px;top:304px;font-size:12.75px">1.000</div>
<div class="a t " style="left:445px;top:304px;width:37px;text-align:right;font-size:12.75px">0</div>
<div class="a t " style="left:487px;top:304px;width:38px;text-align:right;font-size:12.75px">0</div>
<div class="a t " style="left:535px;top:304px;font-size:13.1px;font-weight:bold;color:#0000ff">addPeople</div>
<div class="a t " style="left:697px;top:304px;font-size:12.75px">00411700</div>
<div class="a t " style="left:785px;top:304px;font-size:13.1px;font-weight:bold;color:#0000ff">FUN_004116f0</div>
<div class="a t " style="left:947px;top:304px;font-size:12.75px">004116f0</div>
<div class="a t " style="left:1035px;top:304px;font-size:12.75px">Exact Function Instruc...</div>
<div class="a t " style="left:13px;top:324px;font-size:12.75px">00411a61</div>
<div class="a t " style="left:100px;top:324px;font-size:12.75px">00411a41</div>
<div class="a t " style="left:229px;top:324px;font-size:12.75px">Function</div>
<div class="a t " style="left:316px;top:324px;font-size:12.75px">1.000</div>
<div class="a t " style="left:383px;top:324px;font-size:12.75px">0.000</div>
<div class="a t " style="left:445px;top:324px;width:37px;text-align:right;font-size:12.75px">0</div>
<div class="a t " style="left:487px;top:324px;width:38px;text-align:right;font-size:12.75px">-1</div>
<div class="a t " style="left:535px;top:324px;font-size:13.1px;font-weight:bold;color:#0000ff">initializePeople</div>
<div class="a t " style="left:697px;top:324px;font-size:12.75px">004117c0</div>
<div class="a t " style="left:785px;top:324px;font-size:13.1px;font-weight:bold;color:#0000ff">FUN_004117b0</div>
<div class="a t " style="left:947px;top:324px;font-size:12.75px">004117b0</div>
<div class="a t " style="left:1035px;top:324px;font-size:12.75px">Possible Implied Match</div>
<div class="a" style="left:8px;top:341px;width:1184px;height:20px;background:#f7fbff"></div>
<div class="a t " style="left:13px;top:344px;font-size:12.75px">00411a69</div>
<div class="a t " style="left:100px;top:344px;font-size:12.75px">00411a49</div>
<div class="a t " style="left:229px;top:344px;font-size:12.75px">Function</div>
<div class="a t " style="left:316px;top:344px;font-size:12.75px">1.000</div>
<div class="a t " style="left:383px;top:344px;font-size:12.75px">0.000</div>
<div class="a t " style="left:445px;top:344px;width:37px;text-align:right;font-size:12.75px">0</div>
<div class="a t " style="left:487px;top:344px;width:38px;text-align:right;font-size:12.75px">-1</div>
<div class="a t " style="left:535px;top:344px;font-size:13.1px;font-weight:bold;color:#0000ff">deployGadget</div>
<div class="a t " style="left:697px;top:344px;font-size:12.75px">004118f0</div>
<div class="a t " style="left:785px;top:344px;font-size:13.1px;font-weight:bold;color:#0000ff">FUN_004118c0</div>
<div class="a t " style="left:947px;top:344px;font-size:12.75px">004118c0</div>
<div class="a t " style="left:1035px;top:344px;font-size:12.75px">Possible Implied Match</div>
<div class="a t " style="left:13px;top:364px;font-size:12.75px">00411a86</div>
<div class="a t " style="left:100px;top:364px;font-size:12.75px">00411a66</div>
<div class="a t " style="left:229px;top:364px;font-size:12.75px">Function</div>
<div class="a t " style="left:316px;top:364px;font-size:12.75px">1.000</div>
<div class="a t " style="left:383px;top:364px;font-size:12.75px">1.000</div>
<div class="a t " style="left:445px;top:364px;width:37px;text-align:right;font-size:12.75px">0</div>
<div class="a t " style="left:487px;top:364px;width:38px;text-align:right;font-size:12.75px">0</div>
<div class="a t " style="left:535px;top:364px;font-size:13.1px;font-weight:bold;color:#0000ff">__RTC_CheckEsp</div>
<div class="a t " style="left:697px;top:364px;font-size:12.75px">00411b80</div>
<div class="a t " style="left:785px;top:364px;font-size:13.1px;font-weight:bold;color:#0000ff">__RTC_CheckEsp</div>
<div class="a t " style="left:947px;top:364px;font-size:12.75px">00411b60</div>
<div class="a t " style="left:1035px;top:364px;font-size:12.75px">Exact Function Instruc...</div>
<div class="a" style="left:8px;top:381px;width:1184px;height:20px;background:#f7fbff"></div>
<div class="a t " style="left:13px;top:384px;font-size:12.75px">00411a4e</div>
<div class="a t " style="left:100px;top:384px;font-size:12.75px">00411a2e</div>
<div class="a t " style="left:229px;top:384px;font-size:12.75px">Data</div>
<div class="a t " style="left:316px;top:384px;font-size:12.75px">1.000</div>
<div class="a t " style="left:383px;top:384px;font-size:12.75px">0.000</div>
<div class="a t " style="left:445px;top:384px;width:37px;text-align:right;font-size:12.75px">0</div>
<div class="a t " style="left:487px;top:384px;width:38px;text-align:right;font-size:12.75px">-1</div>
<div class="a t " style="left:535px;top:384px;font-size:13.1px;font-weight:bold;color:#0000ff">personList</div>
<div class="a t " style="left:697px;top:384px;font-size:12.75px">00418138</div>
<div class="a t " style="left:785px;top:384px;font-size:13.1px;font-weight:bold;color:#0000ff">DAT_00418138</div>
<div class="a t " style="left:947px;top:384px;font-size:12.75px">00418138</div>
<div class="a t " style="left:1035px;top:384px;font-size:12.75px">Possible Implied Match</div>
<div class="a" style="left:8px;top:484px;width:1184px;height:1px;background:#bdbabd"></div>
<div class="a" style="left:8px;top:485px;width:1184px;height:1px;background:#848284"></div>
<div class="a" style="left:8px;top:485px;width:1px;height:30px;background:#7b797b"></div>
<div class="a" style="left:9px;top:486px;width:1183px;height:1px;background:#fff"></div>
<div class="a" style="left:9px;top:486px;width:1px;height:28px;background:#fff"></div>
<div class="a" style="left:9px;top:514px;width:1183px;height:1px;background:#fff"></div>
<div class="a t " style="left:13px;top:492px;font-size:12.75px">Filter:</div>
<div class="a" style="left:59px;top:488px;width:1067px;height:23px;background:#fff;border:1px solid #c6c3c6;border-top-color:#b5b2b5"></div>
<svg class="a" style="left:1131px;top:491px" width="16" height="15" viewBox="0 0 16 15"><path d="M2.5 0.5 L11 0.5 L15.5 4.5 L15.5 14.5 L2.5 14.5 Z" fill="#b9d6f8" stroke="#4a90e2"/>
<rect x="3.4" y="11" width="11.2" height="2" fill="#6aa8ee"/>
<path d="M4.6 4.6 L1 7.6 L4.6 10.4 M7.4 4.6 L11 7.6 L7.4 10.4" fill="none" stroke="#3a86e0" stroke-width="1.6"/></svg>
<svg class="a" style="left:1158px;top:492px" width="14" height="14" viewBox="0 0 14 14"><g stroke="#6e6e6e" stroke-width="1.5"><path d="M0.3 2.3H13.7M0.3 7H13.7M0.3 11.8H13.7"/></g><g fill="#6e6e6e"><circle cx="3.6" cy="2.3" r="2.1"/><circle cx="11" cy="7" r="2.1"/><circle cx="5.8" cy="11.8" r="2.1"/></g></svg>
<svg class="a" style="left:1181px;top:497px" width="6" height="3" viewBox="0 0 6 3"><path d="M0 0 H6 L3 3 Z" fill="#111"/></svg>
<svg class="a" style="left:8px;top:524px" width="16" height="16" viewBox="0 0 16 16"><circle cx="8" cy="8" r="7.7" fill="#fdfbfb" stroke="#1e1e1e" stroke-width="0.9"/>
<path d="M2.2 7.4 L4.4 5.8 L6.2 6 L8.4 3.6 L11 1.5 L12.8 2.6 C14.8 4.8 15.2 8.2 13.8 11.6 C13.8 8.8 13.2 6.8 12 5.8 C11.6 7.8 10.4 9.6 9.2 10.4 L8.4 12.6 L6.2 12.4 L7.8 10.6 L8 8.6 L6.6 9 L4.4 8.8 L2.6 8.8 Z" fill="#e2200f"/></svg>
<div class="a" style="left:28px;top:521px;width:1167px;height:1px;background:#848284"></div>
<div class="a" style="left:28px;top:521px;width:1px;height:24px;background:#848284"></div>
<div class="a" style="left:29px;top:543px;width:1166px;height:2px;background:#fff"></div>
<div class="a" style="left:1193px;top:522px;width:2px;height:23px;background:#fff"></div>
</body></html>
